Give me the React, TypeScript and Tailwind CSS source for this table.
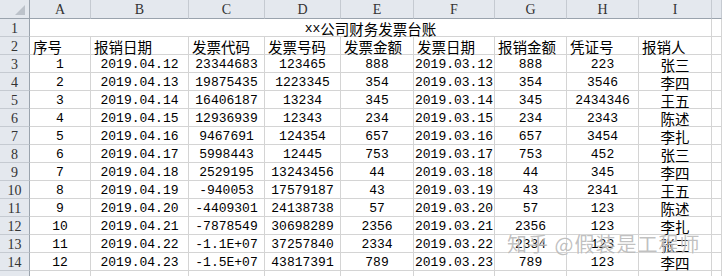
const cols = ['A', 'B', 'C', 'D', 'E', 'F', 'G', 'H', 'I', ''];

const rows: (string | number)[][] = [
  [1, '2019.04.12', '23344683', '123465', '888', '2019.03.12', '888', '223', '张三'],
  [2, '2019.04.13', '19875435', '1223345', '354', '2019.03.13', '354', '3546', '李四'],
  [3, '2019.04.14', '16406187', '13234', '345', '2019.03.14', '345', '2434346', '王五'],
  [4, '2019.04.15', '12936939', '12343', '234', '2019.03.15', '234', '2343', '陈述'],
  [5, '2019.04.16', '9467691', '124354', '657', '2019.03.16', '657', '3454', '李扎'],
  [6, '2019.04.17', '5998443', '12445', '753', '2019.03.17', '753', '452', '张三'],
  [7, '2019.04.18', '2529195', '13243456', '44', '2019.03.18', '44', '345', '李四'],
  [8, '2019.04.19', '-940053', '17579187', '43', '2019.03.19', '43', '2341', '王五'],
  [9, '2019.04.20', '-4409301', '24138738', '57', '2019.03.20', '57', '123', '陈述'],
  [10, '2019.04.21', '-7878549', '30698289', '2356', '2019.03.21', '2356', '123', '李扎'],
  [11, '2019.04.22', '-1.1E+07', '37257840', '2334', '2019.03.22', '2334', '123', '张三'],
  [12, '2019.04.23', '-1.5E+07', '43817391', '789', '2019.03.23', '789', '123', '李四'],
];

const heads = ['序号', '报销日期', '发票代码', '发票号码', '发票金额', '发票日期', '报销金额', '凭证号', '报销人'];

const mono = "font-['Liberation_Mono',monospace] text-[13px] leading-[14px]";
const cjk = "font-['Noto_Sans_CJK_SC',sans-serif] text-[14.5px] leading-[15px]";
const cell =
  'h-[18px] pt-[2px] border-r border-b border-[#d4d4d4] flex items-center whitespace-nowrap text-black';
const rowHead =
  "h-[18px] pt-[2px] border-r border-b border-[#c5cad1] border-r-[#9aa3ad] bg-[#e4e8ee] flex items-center justify-center font-['Liberation_Serif',serif] text-[14px] leading-[14px] text-[#333]";

export default function App() {
  return (
    <div className="relative w-[722px] h-[276px] overflow-hidden bg-white">
      <div className="grid grid-cols-[30px_61px_98px_76px_76px_73px_81px_72px_72px_73px_1fr]">
        {/* column headers */}
        <div className="relative h-[19px] bg-[#e4e8ee] border-r border-b border-[#9aa3ad]">
          <div className="absolute right-[4px] bottom-[3px] w-0 h-0 border-l-[10px] border-l-transparent border-b-[10px] border-b-[#bcc2ca]" />
        </div>
        {cols.map((c, i) => (
          <div
            key={i}
            className="h-[19px] pt-[1px] bg-[#e4e8ee] border-r border-r-[#c5cad1] border-b border-b-[#9aa3ad] flex items-center justify-center font-['Liberation_Serif',serif] text-[14px] leading-[14px] text-[#333]"
          >
            {c}
          </div>
        ))}

        {/* row 1: title */}
        <div className={rowHead}>1</div>
        <div className={`${cell} col-span-9 justify-center`}>
          <span className={mono}>xx</span>
          <span className={cjk}>公司财务发票台账</span>
        </div>
        <div className={cell} />

        {/* row 2: headings */}
        <div className={rowHead}>2</div>
        {heads.map((h, i) => (
          <div key={i} className={`${cell} ${cjk} pl-[3px]`}>
            {h}
          </div>
        ))}
        <div className={cell} />

        {rows.map((r, ri) => (
          <>
            <div key={`h${ri}`} className={rowHead}>
              {ri + 3}
            </div>
            {r.map((v, ci) => (
              <div
                key={`${ri}-${ci}`}
                className={`${cell} justify-center ${ci === 8 ? cjk : mono}`}
              >
                {v}
              </div>
            ))}
            <div key={`e${ri}`} className={cell} />
          </>
        ))}

        {/* partial row 15 at the bottom edge */}
        <div className={rowHead} />
        {cols.map((_, i) => (
          <div key={`l${i}`} className={cell} />
        ))}
      </div>

      <div className="absolute left-[507px] top-[232px] font-['Noto_Sans_CJK_SC',sans-serif] text-[20px] leading-[24px] tracking-[1px] text-[rgba(140,140,140,0.55)] [text-shadow:0_0_1px_rgba(255,255,255,0.9)] whitespace-nowrap">
        知乎 @假装是工程师
      </div>
    </div>
  );
}
